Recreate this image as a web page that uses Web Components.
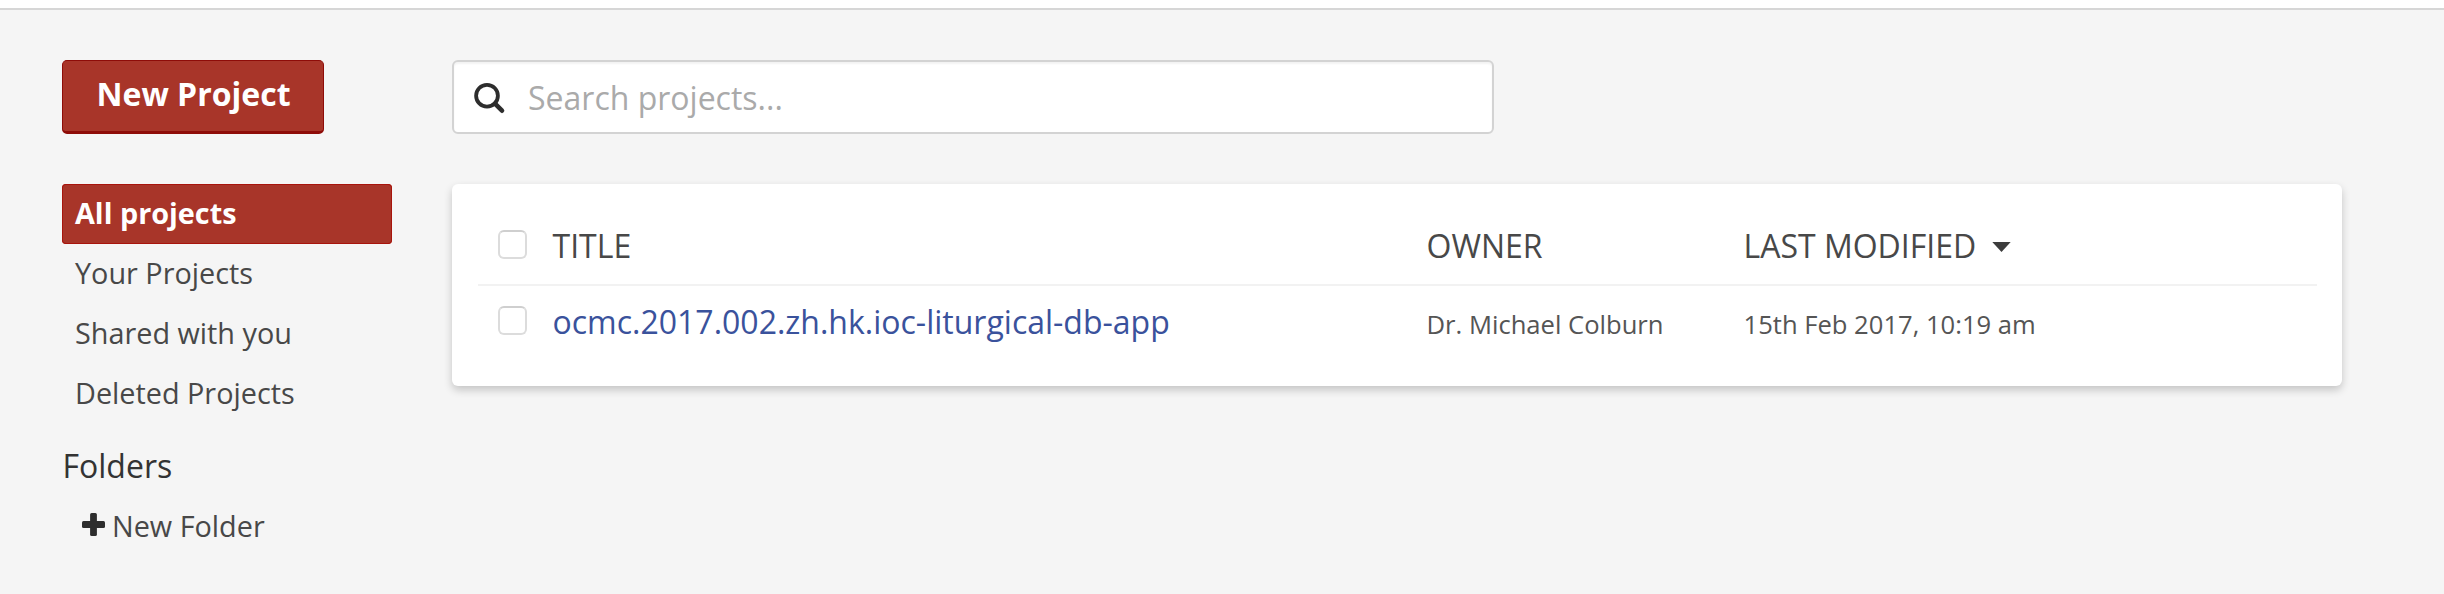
<!DOCTYPE html>
<html lang="en">
<head>
<meta charset="utf-8">
<title>Projects</title>
<style>
body { margin: 0; background: #f5f5f5; font: 28.8px/58px "Open Sans", sans-serif; color: #3c3c3c; }
</style>
</head>
<body>
<project-page>
  <project-sidebar slot="side">
    <new-button>New Project</new-button>
    <nav-item active>All projects</nav-item>
    <nav-item>Your Projects</nav-item>
    <nav-item>Shared with you</nav-item>
    <nav-item>Deleted Projects</nav-item>
    <folder-heading>Folders</folder-heading>
    <new-folder>New Folder</new-folder>
  </project-sidebar>
  <search-box>Search projects...</search-box>
  <project-card>
    <project-row header>
      <span slot="title">TITLE</span>
      <span slot="owner">OWNER</span>
      <span slot="modified">LAST MODIFIED</span>
      <sort-caret slot="modified"></sort-caret>
    </project-row>
    <project-row>
      <span slot="title">ocmc.2017.002.zh.hk.ioc-liturgical-db-app</span>
      <span slot="owner">Dr. Michael Colburn</span>
      <span slot="modified">15th Feb 2017, 10:19 am</span>
    </project-row>
  </project-card>
</project-page>
<script>
const define = (name, css, html) => customElements.define(name, class extends HTMLElement {
  constructor() {
    super();
    this.attachShadow({ mode: 'open' }).innerHTML = `<style>:host{box-sizing:border-box}*{box-sizing:border-box}${css}</style>${html}`;
  }
});

define('project-page', `
  :host { display: block; height: 594px; overflow: hidden; }
  header { height: 10px; background: #fff; border-bottom: 2px solid #d6d6d6; }
  main { display: grid; grid-template-columns: 330px 1890px; column-gap: 60px; padding: 50px 0 0 62px; }
`, `<header></header><main><slot name="side"></slot><section><slot></slot></section></main>`);

define('project-sidebar', `:host { display: flex; flex-direction: column; }`, `<slot></slot>`);

define('new-button', `
  :host { display: block; width: 262px; margin-bottom: 50px; }
  button { display: block; width: 100%; height: 74px; padding: 0 0 4px 1px; margin: 0; border: 1px solid #8e0c08;
    border-bottom-width: 3px; border-radius: 5px; background: #a83529; color: #fff; text-align: center;
    font: bold 32px/66px "Open Sans", sans-serif; }
`, `<button><slot></slot></button>`);

define('nav-item', `
  :host { display: block; height: 60px; padding-left: 13px; line-height: 58px; color: #484848; }
  :host([active]) { background: #a83529; color: #fff; font-weight: bold; border-radius: 4px; box-shadow: inset 0 0 0 1px #a8140c; }
`, `<slot></slot>`);

define('folder-heading', `
  :host { display: block; margin-top: 22px; padding-left: .5px; font-size: 32px; line-height: 40px; color: #333; }
`, `<slot></slot>`);

define('new-folder', `
  :host { display: flex; align-items: center; height: 58px; margin-top: 11px; padding-left: 20px; color: #484848; }
  svg { flex: none; width: 23px; height: 23px; margin: 0 7px 4px 0; }
`, `<svg viewBox="0 0 23 23" fill="#2d2d2d"><rect x="8.1" y="0" width="6.8" height="23" rx="1.5"/><rect x="0" y="8.1" width="23" height="6.8" rx="1.5"/></svg><span><slot></slot></span>`);

define('search-box', `
  :host { display: flex; align-items: center; width: 1042px; height: 74px; margin-bottom: 50px; padding-left: 20px;
    border: 2px solid #d3d3d3; border-radius: 6px; background: #fff; box-shadow: inset 0 2px 2px rgba(0,0,0,.05);
    font-size: 32px; color: #aaa; }
  svg { flex: none; width: 32px; height: 32px; margin: 2px 22px 0 0; }
  span { line-height: 40px; padding-top: 2px; }
`, `<svg viewBox="0 0 32 32" fill="none" stroke="#2d2d2d"><circle cx="13" cy="13.7" r="10.9" stroke-width="3.8"/><path d="M21 21.7l7 7" stroke-width="4.6" stroke-linecap="round"/></svg><span><slot></slot></span>`);

define('project-card', `
  :host { display: block; height: 202px; padding: 0 25px 0 26px; background: #fff; border-radius: 6px; box-shadow: 0 4px 8px rgba(0,0,0,.2); }
`, `<slot></slot>`);

define('project-row', `
  :host { display: grid; grid-template-columns: 74.5px 874px 317px 1fr; align-items: baseline; padding-top: 16px; line-height: 40px; font-size: 25.6px; color: #555; }
  :host([header]) { height: 102px; padding-top: 42px; border-bottom: 2px solid #f2f2f2; font-size: 32px; color: #484848; }
  i { align-self: start; width: 29px; height: 29px; margin: 4px 0 0 20px; border: 2px solid #dcdcdc; border-top-color: #cfcfcf; border-radius: 6px; background: #fff; }
  .t { font-size: 32px; color: #3a529c; }
  :host([header]) .t { color: inherit; }
`, `<i></i><div class="t"><slot name="title"></slot></div><div><slot name="owner"></slot></div><div><slot name="modified"></slot></div>`);

define('sort-caret', `
  :host { display: inline-block; width: 19px; height: 10px; margin-left: 16px; vertical-align: 6px; line-height: 0; }
`, `<svg width="19" height="10" viewBox="0 0 19 10"><path d="M.3 0h18.4L9.500 10z" fill="#3c3c3c"/></svg>`);
</script>
</body>
</html>
